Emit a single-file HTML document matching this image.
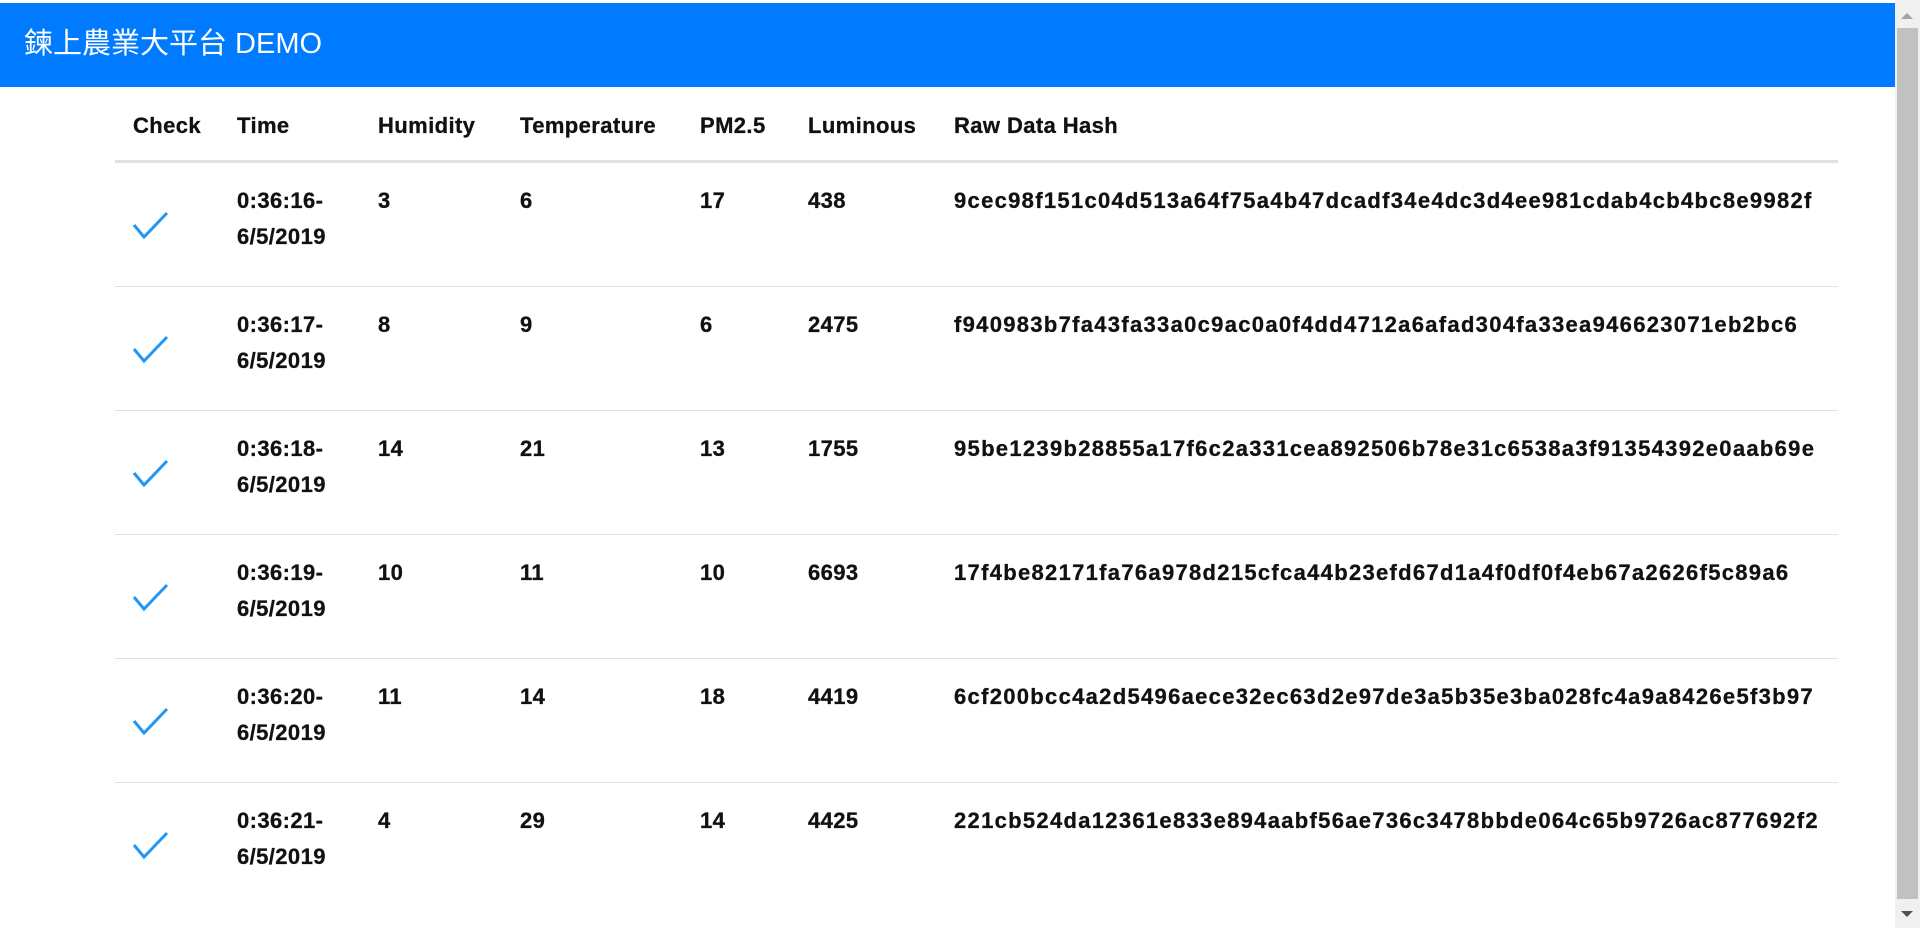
<!DOCTYPE html>
<html><head><meta charset="utf-8"><style>
body{margin:0;width:1920px;height:928px;overflow:hidden;background:#fff;position:relative;font-family:"Liberation Sans","Noto Sans CJK TC",sans-serif;}
.bar{position:absolute;left:0;top:3px;width:1895px;height:84px;background:#007bff;}
.title{position:absolute;left:24px;top:27px;color:#fff;font-size:29px;line-height:34px;}
.t{position:absolute;font-weight:bold;font-size:22px;color:#111;line-height:36px;white-space:nowrap;letter-spacing:0.4px;-webkit-text-stroke:0.3px #111;}
.hash{letter-spacing:1.3px;}
.hl{position:absolute;left:115px;width:1723px;background:#dee2e6;}
.sb{position:absolute;left:1895px;top:0;width:25px;height:928px;background:#f0f0f0;}
.thumb{position:absolute;left:1897px;top:28px;width:21px;height:871px;background:#c1c1c1;}
</style></head><body>
<div class="bar"></div>
<div class="title">鍊上農業大平台 DEMO</div>
<div class="sb"></div><div class="thumb"></div>
<svg style="position:absolute;left:1900px;top:12px" width="14" height="8"><path d="M1 7L7 1L13 7Z" fill="#a3a3a3"/></svg>
<svg style="position:absolute;left:1900px;top:910px" width="14" height="8"><path d="M1 1L7 7L13 1Z" fill="#505050"/></svg>

<div class="t" style="left:133px;top:108px">Check</div>
<div class="t" style="left:237px;top:108px">Time</div>
<div class="t" style="left:378px;top:108px">Humidity</div>
<div class="t" style="left:520px;top:108px">Temperature</div>
<div class="t" style="left:700px;top:108px">PM2.5</div>
<div class="t" style="left:808px;top:108px">Luminous</div>
<div class="t" style="left:954px;top:108px">Raw Data Hash</div>
<div class="hl" style="top:160px;height:3px"></div>

<div id="rows"></div>
<script>
var d=[["16","3","6","17","438","9cec98f151c04d513a64f75a4b47dcadf34e4dc3d4ee981cdab4cb4bc8e9982f"],
["17","8","9","6","2475","f940983b7fa43fa33a0c9ac0a0f4dd4712a6afad304fa33ea946623071eb2bc6"],
["18","14","21","13","1755","95be1239b28855a17f6c2a331cea892506b78e31c6538a3f91354392e0aab69e"],
["19","10","11","10","6693","17f4be82171fa76a978d215cfca44b23efd67d1a4f0df0f4eb67a2626f5c89a6"],
["20","11","14","18","4419","6cf200bcc4a2d5496aece32ec63d2e97de3a5b35e3ba028fc4a9a8426e5f3b97"],
["21","4","29","14","4425","221cb524da12361e833e894aabf56ae736c3478bbde064c65b9726ac877692f2"]];
var h="";
for(var i=0;i<6;i++){var y=163+i*124;var r=d[i];
h+='<svg style="position:absolute;left:132px;top:'+(y+48)+'px" width="38" height="30"><path d="M2 14L12 26L35 2" fill="none" stroke="#2196f3" stroke-width="3"/></svg>';
h+='<div class="t" style="left:237px;top:'+(y+20)+'px">0:36:'+r[0]+'-<br>6/5/2019</div>';
h+='<div class="t" style="left:378px;top:'+(y+20)+'px">'+r[1]+'</div>';
h+='<div class="t" style="left:520px;top:'+(y+20)+'px">'+r[2]+'</div>';
h+='<div class="t" style="left:700px;top:'+(y+20)+'px">'+r[3]+'</div>';
h+='<div class="t" style="left:808px;top:'+(y+20)+'px">'+r[4]+'</div>';
h+='<div class="t hash" style="left:954px;top:'+(y+20)+'px">'+r[5]+'</div>';
if(i<5)h+='<div class="hl" style="top:'+(y+123)+'px;height:1px"></div>';}
document.getElementById("rows").innerHTML=h;
</script>
</body></html>
